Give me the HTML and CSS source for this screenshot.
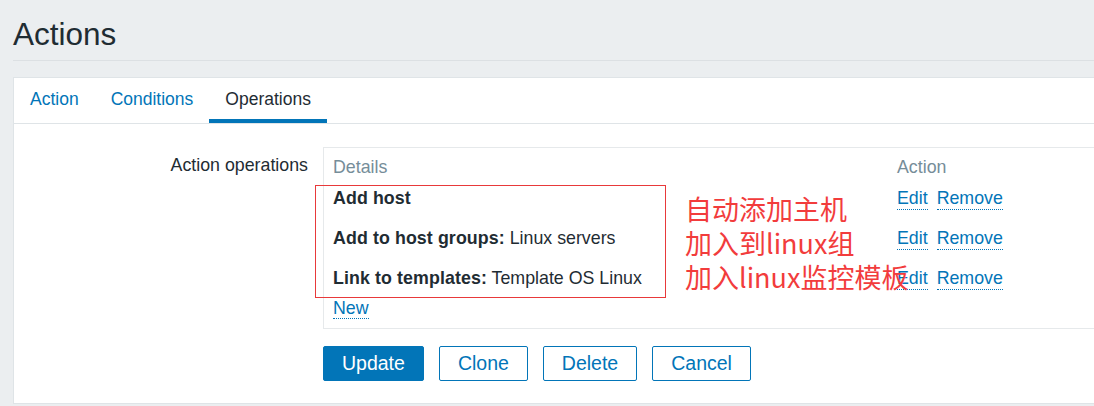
FILE: index.html
```html
<!DOCTYPE html>
<html lang="en">
<head>
<meta charset="utf-8">
<title>Actions</title>
<link rel="stylesheet" href="styles.css">
</head>
<body>
<header class="page-header">
  <h1 class="page-title">Actions</h1>
</header>
<main class="panel">
  <nav class="tabs">
    <a class="tab" href="#">Action</a>
    <a class="tab" href="#">Conditions</a>
    <a class="tab tab-active" href="#">Operations</a>
  </nav>
  <div class="form">
    <div class="form-label">Action operations</div>
    <div class="ops-box">
      <div class="ops-grid">
        <div class="ops-head">Details</div>
        <div class="ops-head">Action</div>
        <div class="ops-cell"><b>Add host</b></div>
        <div class="ops-cell ops-actions"><a class="link" href="#">Edit</a><a class="link" href="#">Remove</a></div>
        <div class="ops-cell"><b>Add to host groups:</b> Linux servers</div>
        <div class="ops-cell ops-actions"><a class="link" href="#">Edit</a><a class="link" href="#">Remove</a></div>
        <div class="ops-cell"><b>Link to templates:</b> Template OS Linux</div>
        <div class="ops-cell ops-actions"><a class="link" href="#">Edit</a><a class="link" href="#">Remove</a></div>
      </div>
      <div class="ops-new"><a class="link" href="#">New</a></div>
    </div>
    <div class="form-buttons">
      <button class="btn btn-primary" type="button">Update</button>
      <button class="btn" type="button">Clone</button>
      <button class="btn" type="button">Delete</button>
      <button class="btn" type="button">Cancel</button>
    </div>
  </div>
</main>
<div class="annot-box"></div>
<div class="annot-text">自动添加主机<br>加入到linux组<br>加入linux监控模板</div>
</body>
</html>
```

FILE: styles.css
```css
html, body {
  margin: 0;
  padding: 0;
}
body {
  width: 1094px;
  height: 406px;
  overflow: hidden;
  position: relative;
  background: #ebeef0;
  font-family: "Liberation Sans", Arial, sans-serif;
  font-size: 17.8px;
  color: #1f2c33;
}
.page-header {
  margin-left: 13px;
  padding: 16px 0 8px;
  border-bottom: 1px solid #dce0e3;
}
.page-title {
  margin: 0;
  font-size: 31.5px;
  font-weight: normal;
  line-height: 36px;
  color: #1f2c33;
}
.panel {
  display: block;
  margin: 16px 0 0 13px;
  width: 1200px;
  background: #ffffff;
  border: 1px solid #dfe4e7;
}
.tabs {
  display: flex;
  border-bottom: 1px solid #dfe4e7;
  font-size: 17.5px;
}
.tab {
  display: block;
  padding: 11px 16px 9px;
  line-height: 21px;
  border-bottom: 4px solid transparent;
  color: #0275b8;
  text-decoration: none;
}
.tab-active {
  color: #1f2c33;
  border-bottom-color: #0275b8;
}
.form {
  display: grid;
  grid-template-columns: 294px 1fr;
  column-gap: 15px;
  padding: 23px 0 22px;
}
.form-label {
  padding-top: 8px;
  line-height: 21px;
  text-align: right;
}
.ops-box {
  border: 1px solid #e6e9eb;
  padding: 9px 10px 9px 9px;
}
.ops-grid {
  display: grid;
  grid-template-columns: 564px 1fr;
  line-height: 21px;
}
.ops-head {
  color: #768d99;
  padding-bottom: 1px;
}
.ops-cell {
  padding: 9px 0;
}
.ops-cell b {
  font-weight: bold;
  letter-spacing: 0.1px;
}
.ops-actions {
  display: flex;
  gap: 9px;
}
.link {
  color: #0275b8;
  text-decoration: none;
  border-bottom: 1px dotted #0275b8;
}
.ops-new {
  margin-top: -1px;
  line-height: 21px;
}
.form-buttons {
  grid-column: 2;
  display: flex;
  gap: 15px;
  margin-top: 17px;
}
.btn {
  height: 35px;
  padding: 0 18px;
  font-family: inherit;
  font-size: 19.5px;
  line-height: 33px;
  border: 1px solid #0275b8;
  border-radius: 2px;
  background: #ffffff;
  color: #0275b8;
}
.btn-primary {
  background: #0275b8;
  color: #ffffff;
}
.annot-box {
  position: absolute;
  left: 315px;
  top: 185px;
  width: 351px;
  height: 113px;
  box-sizing: border-box;
  border: 1px solid #e8393a;
}
.annot-text {
  position: absolute;
  left: 685px;
  top: 192px;
  font-family: "Noto Sans CJK SC", "Noto Sans", sans-serif;
  font-size: 27px;
  line-height: 34px;
  color: #f23c3c;
  white-space: nowrap;
}
```
